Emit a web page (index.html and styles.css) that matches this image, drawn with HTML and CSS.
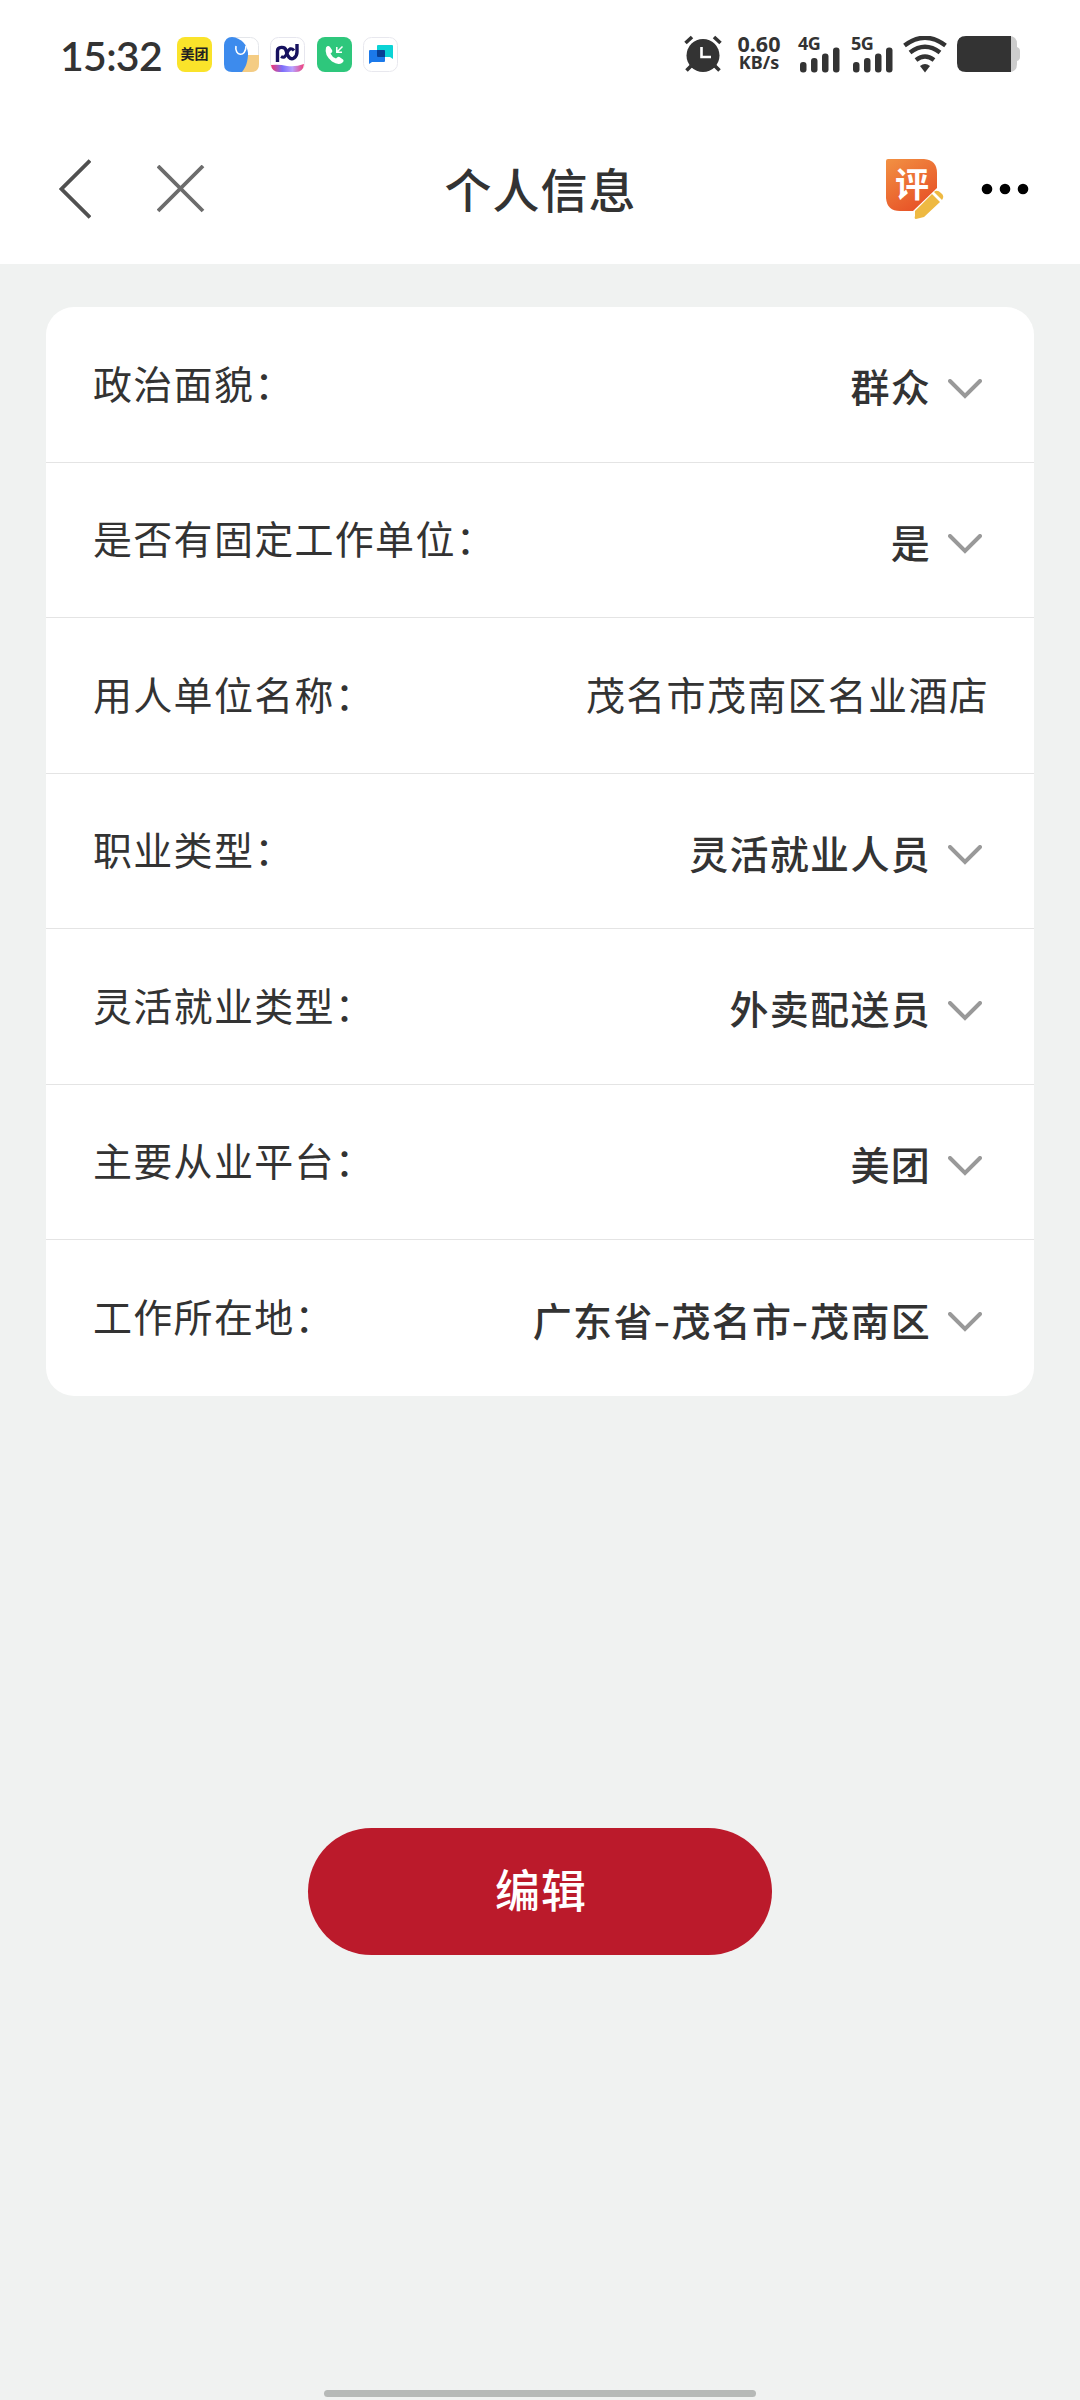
FILE: index.html
```html
<!DOCTYPE html>
<html lang="zh">
<head>
  <meta charset="UTF-8">
  <title>个人信息</title>
  <link rel="stylesheet" href="styles.css">
</head>
<body>
  <header class="header">
    <div class="status">
      <span class="time">15:32</span>
      <div class="apps">
        <span class="app app-meituan">美团</span>
        <svg class="app" viewBox="0 0 35 35">
          <rect x=".5" y=".5" width="34" height="34" rx="8" fill="#fff" stroke="#e4e6ea"/>
          <path d="M18 18h17v9q0 8-8 8H18z" fill="#f4cc83"/>
          <path d="M8 0C17 1 23 7 24 16C24 24 22 30 18 35H8Q0 35 0 27V8Q1 0 8 0z" fill="#3d8bed"/>
          <path d="M12 9C10 19 22 21 22 9" fill="none" stroke="#fff" stroke-width="1.6"/>
        </svg>
        <svg class="app" viewBox="0 0 35 35">
          <defs>
            <linearGradient id="wave" x1="0" x2="1">
              <stop offset="0" stop-color="#f0356e"/>
              <stop offset=".35" stop-color="#7d70fa"/>
              <stop offset=".65" stop-color="#b9a0ff"/>
              <stop offset="1" stop-color="#f03c78"/>
            </linearGradient>
          </defs>
          <rect x=".5" y=".5" width="34" height="34" rx="8" fill="#fff" stroke="#e6e6ee"/>
          <path d="M1 28q8-1 16 1q9 1 17-2q-1 8-8 8H9q-7 0-8-7z" fill="url(#wave)"/>
          <path d="M7.500 25V14C7.500 9.500 15 9 16 13.500C17 18 20 24 24 21Q27 19 27 15V7" fill="none" stroke="#16115f" stroke-width="3.400"/>
          <path d="M11 19.500Q15 22 17 16Q20 9 24 13.500" fill="none" stroke="#16115f" stroke-width="3.200"/>
        </svg>
        <svg class="app" viewBox="0 0 35 35">
          <rect width="35" height="35" rx="8" fill="#2ec77c"/>
          <path d="M9 10.500Q11 8 13 10L15 13Q16 15 13.500 16.500Q15 20 19 21.500Q21 19 22.500 20L26 22.500Q27.500 24 25 26Q21 28.500 15 24.500Q7 18 9 10.500z" fill="#fff"/>
          <path d="M25.500 9.500L20 15M19.800 10v5.200H25" fill="none" stroke="#fff" stroke-width="1.500"/>
        </svg>
        <svg class="app" viewBox="0 0 35 35">
          <rect x=".5" y=".5" width="34" height="34" rx="8" fill="#fff" stroke="#e8e8ee"/>
          <path d="M15 8h14q1 0 1 1v13l-3-2H15q-1 0-1-1V9q0-1 1-1z" fill="#0bd3d5"/>
          <path d="M7 13h14q1 0 1 1v10q0 1-1 1H9l-3 2V14q0-1 1-1z" fill="#1b79ea"/>
          <path d="M14 13h7q1 0 1 1v6h-7q-1 0-1-1z" fill="#073f94"/>
        </svg>
      </div>
      <div class="system">
        <svg class="alarm" width="38" height="38" viewBox="0 0 38 38">
          <circle cx="19" cy="20.500" r="16.500" fill="#333"/>
          <path d="M1.500 8L8 2M30 2l6.500 6M7 31l-4.500 4.500M31 31l4.500 4.500" stroke="#333" stroke-width="3.600"/>
          <path d="M17.500 12v10H27" fill="none" stroke="#fff" stroke-width="2.600"/>
        </svg>
        <div class="speed"><span class="rate">0.60</span><span class="unit">KB/s</span></div>
        <div class="signal">
          <span>4G</span>
          <svg width="40" height="26" viewBox="0 0 40 26" fill="#333">
            <rect y="15" width="6.500" height="10.500" rx="3"/>
            <rect x="11" y="11" width="6.500" height="14.500" rx="3"/>
            <rect x="22" y="6.500" width="6.500" height="19" rx="3"/>
            <rect x="33" y=".5" width="6.500" height="25" rx="3"/>
          </svg>
        </div>
        <div class="signal signal-5g">
          <span>5G</span>
          <svg width="40" height="26" viewBox="0 0 40 26" fill="#333">
            <rect y="15" width="6.500" height="10.500" rx="3"/>
            <rect x="11" y="11" width="6.500" height="14.500" rx="3"/>
            <rect x="22" y="6.500" width="6.500" height="19" rx="3"/>
            <rect x="33" y=".5" width="6.500" height="25" rx="3"/>
          </svg>
        </div>
        <svg class="wifi" width="44" height="37" viewBox="0 0 44 37">
          <path d="M1.500 9.500Q22-6 42.500 9.500M7 16.500Q22 5 37 16.500M13 24Q22 17 31 24" fill="none" stroke="#333" stroke-width="4.400"/>
          <path d="M17 30q5-4 10 0l-5 6.500z" fill="#333"/>
        </svg>
        <svg width="63" height="36" viewBox="0 0 63 36">
          <path d="M50 0h2q8 0 8 8v3q3 1 3 4v6q0 3-3 4v3q0 8-8 8h-2z" fill="#ccc"/>
          <path d="M9 0H54V36H9Q0 36 0 27V9Q0 0 9 0z" fill="#333"/>
        </svg>
      </div>
    </div>
    <nav class="nav">
      <div class="nav-side">
        <svg width="32" height="60" viewBox="0 0 32 60">
          <path d="M31 1.500L2.500 30L31 58.500" fill="none" stroke="#505050" stroke-width="3.800"/>
        </svg>
        <svg class="close" width="48" height="48" viewBox="0 0 48 48">
          <path d="M1 1L46 46M46 1L1 46" stroke="#6c6c6c" stroke-width="3.800"/>
        </svg>
      </div>
      <h1>个人信息</h1>
      <div class="nav-side nav-right">
        <div class="review">
          <svg width="58" height="62" viewBox="0 0 58 62">
            <defs>
              <linearGradient id="paper" x1="0" y1="0" x2=".6" y2="1">
                <stop offset="0" stop-color="#f29143"/>
                <stop offset="1" stop-color="#e75227"/>
              </linearGradient>
            </defs>
            <path d="M2 0H38Q51 1 51 14V29L27 52H14Q1 52 0 39V2Q0 0 2 0z" fill="url(#paper)"/>
            <path d="M29 52L46 35L54 43L38 58L30 60Q28 60 29 57zM48 33Q51 30 55 34Q59 37 56 41z" fill="#eeb942"/>
          </svg>
          <span>评</span>
        </div>
        <svg width="48" height="12" viewBox="0 0 48 12">
          <circle cx="6" cy="6" r="5.300"/>
          <circle cx="24" cy="6" r="5.300"/>
          <circle cx="42" cy="6" r="5.300"/>
        </svg>
      </div>
    </nav>
  </header>

  <main>
    <div class="card">
      <div class="row">
        <span class="label">政治面貌：</span>
        <span class="select">群众<svg class="arrow" viewBox="0 0 34 20"><path d="M2 2l15 15L32 2"/></svg></span>
      </div>
      <div class="row">
        <span class="label">是否有固定工作单位：</span>
        <span class="select">是<svg class="arrow" viewBox="0 0 34 20"><path d="M2 2l15 15L32 2"/></svg></span>
      </div>
      <div class="row">
        <span class="label">用人单位名称：</span>
        <span class="value">茂名市茂南区名业酒店</span>
      </div>
      <div class="row">
        <span class="label">职业类型：</span>
        <span class="select">灵活就业人员<svg class="arrow" viewBox="0 0 34 20"><path d="M2 2l15 15L32 2"/></svg></span>
      </div>
      <div class="row">
        <span class="label">灵活就业类型：</span>
        <span class="select">外卖配送员<svg class="arrow" viewBox="0 0 34 20"><path d="M2 2l15 15L32 2"/></svg></span>
      </div>
      <div class="row">
        <span class="label">主要从业平台：</span>
        <span class="select">美团<svg class="arrow" viewBox="0 0 34 20"><path d="M2 2l15 15L32 2"/></svg></span>
      </div>
      <div class="row">
        <span class="label">工作所在地：</span>
        <span class="select">广东省<span class="dash">-</span>茂名市<span class="dash">-</span>茂南区<svg class="arrow" viewBox="0 0 34 20"><path d="M2 2l15 15L32 2"/></svg></span>
      </div>
    </div>
    <button class="edit" type="button">编辑</button>
  </main>
  <div class="home-bar"></div>
</body>
</html>
```
FILE: styles.css
```css
* {
  box-sizing: border-box;
}

body {
  display: flex;
  flex-direction: column;
  height: 2400px;
  margin: 0;
  background-color: #f0f2f1;
  color: #333;
  font-family: "Noto Sans CJK SC", sans-serif;
}

svg {
  display: block;
  flex: none;
}

.header {
  height: 264px;
  background-color: #fff;
}

/* status bar */
.status {
  display: flex;
  align-items: center;
  height: 108px;
  padding: 0 60px;
}

.time {
  width: 117px;
  padding-top: 3px;
  font: 600 41px/48px Lato, sans-serif;
  letter-spacing: -0.7px;
}

.apps {
  display: flex;
  gap: 11.600px;
}

.app {
  width: 35px;
  height: 35px;
}

.app-meituan {
  border-radius: 8px;
  background-color: #fae32a;
  color: #222;
  font-size: 14px;
  font-weight: bold;
  line-height: 32px;
  text-align: center;
}

.system {
  display: flex;
  align-items: center;
  margin-left: auto;
}

.speed {
  display: flex;
  flex-direction: column;
  align-items: center;
  width: 46px;
  height: 37px;
  margin-left: 14px;
  font-family: "Noto Sans", sans-serif;
  font-weight: bold;
}

.rate {
  height: 20px;
  font-size: 21.500px;
  line-height: 16px;
}

.unit {
  font-size: 18px;
  line-height: 21px;
}

.signal {
  width: 42px;
  height: 37px;
  margin-left: 16px;
  font: bold 18px/14px "Noto Sans", sans-serif;
  letter-spacing: -0.5px;
}

.signal span {
  display: block;
  height: 11px;
}

.signal svg {
  margin-left: 2px;
}

.signal-5g {
  margin-left: 11px;
}

.wifi {
  margin: 0 10px;
}

/* title bar */
.nav {
  display: flex;
  align-items: center;
  justify-content: space-between;
  height: 156px;
  padding: 6px 51px 0 59px;
}

.nav-side {
  display: flex;
  align-items: center;
  width: 147px;
}

.close {
  margin-left: 66px;
}

.nav-right {
  justify-content: space-between;
  width: 143px;
}

h1 {
  margin: -4px 11px 0 0;
  font-size: 47px;
  font-weight: 500;
  letter-spacing: 1px;
}

.review {
  position: relative;
  padding-top: 2px;
}

.review span {
  position: absolute;
  top: 8px;
  left: 9px;
  color: #fff;
  font-size: 34px;
  font-weight: bold;
  line-height: 36px;
}

/* form */
main {
  display: flex;
  flex: 1;
  flex-direction: column;
  align-items: center;
  padding: 43px 46px 0;
}

.card {
  width: 100%;
  border-radius: 28px;
  background-color: #fff;
}

.row {
  display: flex;
  align-items: center;
  justify-content: space-between;
  height: 155.500px;
  padding: 0 45px 5px 47px;
  border-bottom: 1px solid #e4e4e4;
  font-size: 39px;
  letter-spacing: 1.300px;
}

.row:last-child {
  border-bottom: none;
}

.select {
  display: flex;
  align-items: center;
  padding: 7px 7px 0 0;
  font-weight: 500;
}

.dash {
  padding: 0 1.500px 0 1px;
  transform: scaleX(1.2);
}

.arrow {
  width: 34px;
  height: 20px;
  margin: 7px 0 0 17px;
  fill: none;
  stroke: #999;
  stroke-width: 4;
  stroke-linecap: round;
}

.edit {
  width: 464px;
  height: 127px;
  margin-top: 432px;
  padding: 0 0 5px 2px;
  border: none;
  border-radius: 64px;
  background-color: #bb1a2b;
  color: #fff;
  font-family: inherit;
  font-size: 45px;
  font-weight: 500;
  letter-spacing: 1px;
}

.home-bar {
  align-self: center;
  width: 432px;
  height: 7px;
  margin-bottom: 3px;
  border-radius: 4px;
  background-color: #b6b9b7;
}
```
